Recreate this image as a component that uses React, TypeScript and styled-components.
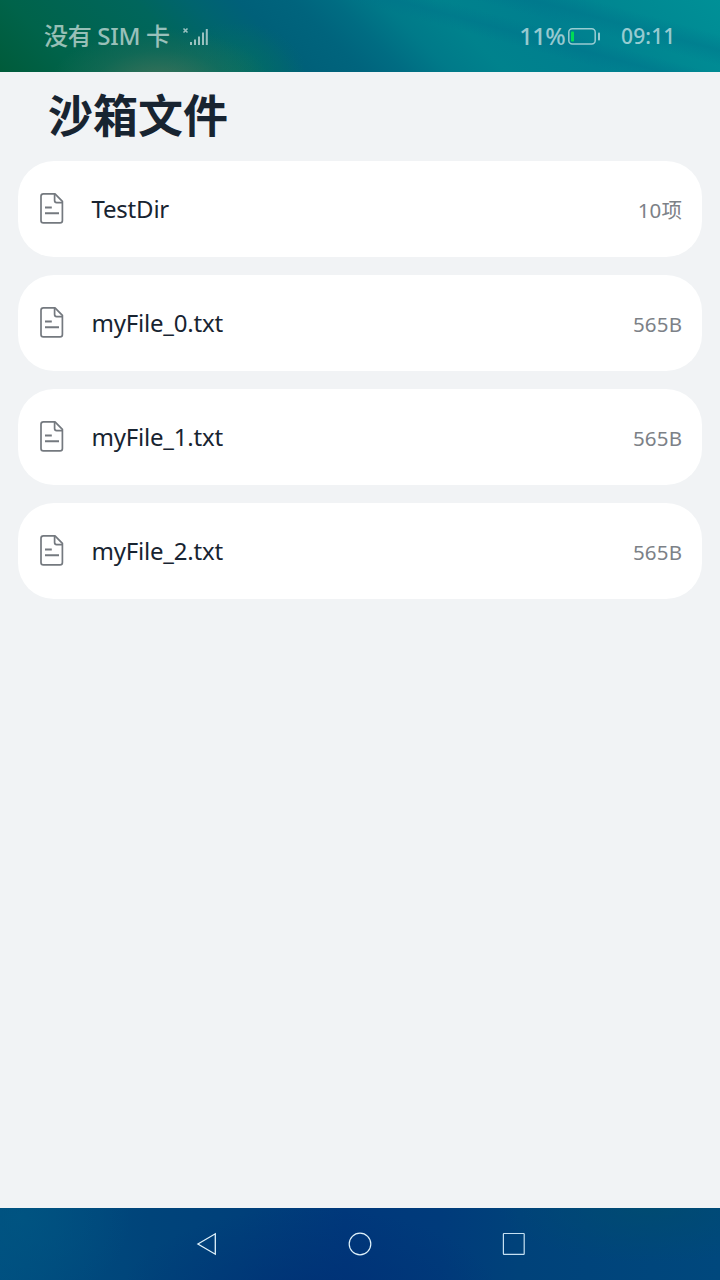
import React from "react";
import styled, { createGlobalStyle } from "styled-components";

const GlobalStyle = createGlobalStyle`
  * { box-sizing: border-box; }
  body {
    margin: 0;
    background: #f1f3f5;
    font-family: "Noto Sans", "Noto Sans CJK SC", sans-serif;
  }
`;

const Screen = styled.div`
  width: 720px;
  height: 1280px;
  display: flex;
  flex-direction: column;
  background: #f1f3f5;
  overflow: hidden;
`;

const StatusBar = styled.header`
  height: 72px;
  flex: none;
  display: flex;
  align-items: center;
  padding: 0 45px 1px 44px;
  color: rgba(255, 255, 255, 0.6);
  background:
    radial-gradient(ellipse 110px 56px at 160px 84px, rgba(70, 116, 90, 0.9), rgba(40, 110, 88, 0.4) 60%, rgba(10, 105, 90, 0) 100%),
    radial-gradient(ellipse 70px 50px at 236px 72px, rgba(4, 112, 98, 0.75), rgba(4, 112, 98, 0) 100%),
    linear-gradient(15deg, transparent 62%, rgba(0, 112, 138, 0.4) 67%, transparent 72%, transparent 75%, rgba(0, 112, 138, 0.4) 81%, transparent 87%),
    linear-gradient(45deg, #005b3a 0, #00634a 10%, #00665c 26%, #00646e 33%, #006079 39%, #00647d 46%, #006c82 51%, #007a89 57%, #00828d 64%, #007f8f 76%, #008892 87%, #009097 100%);
`;

const Carrier = styled.span`
  width: 126px;
  margin-right: 12px;
  font-size: 24px;
  line-height: 36px;
  font-weight: 500;
  letter-spacing: -0.3px;
  white-space: nowrap;
`;

const Percent = styled.span`
  margin-left: auto;
  margin-right: 2px;
  font-size: 24px;
  line-height: 36px;
  font-weight: 500;
  letter-spacing: -0.7px;
`;

const Clock = styled.time`
  width: 54px;
  margin-left: 20px;
  font-size: 21px;
  line-height: 36px;
  font-weight: 500;
  letter-spacing: 0.15px;
  white-space: nowrap;
`;

const Content = styled.main`
  flex: 1;
  display: flex;
  flex-direction: column;
  padding: 0 18px;
`;

const Title = styled.h1`
  height: 89px;
  margin: 0;
  padding-left: 30px;
  color: #182431;
  font-family: "Noto Sans CJK SC", sans-serif;
  font-size: 45px;
  font-weight: 700;
  line-height: 84px;
`;

const FileList = styled.ul`
  display: flex;
  flex-direction: column;
  gap: 18px;
  margin: 0;
  padding: 0;
  list-style: none;
`;

const FileRow = styled.li`
  height: 96px;
  display: flex;
  align-items: center;
  padding: 0 20px 2px 21px;
  border-radius: 36px;
  background: #fff;
`;

const FileName = styled.span`
  flex: 1;
  margin-left: 26.5px;
  padding-top: 2px;
  color: #182431;
  font-size: 24px;
  line-height: 34px;
  font-weight: 450;
  letter-spacing: -0.2px;
`;

const FileMeta = styled.span`
  color: #7c8187;
  font-size: 20.5px;
  font-weight: 400;
  line-height: 30px;
  letter-spacing: 0.2px;
  margin-right: -0.2px;
  padding-top: 3px;
`;

const NavBar = styled.nav`
  height: 72px;
  flex: none;
  display: flex;
  align-items: center;
  justify-content: center;
  gap: 130px;
  background:
    radial-gradient(ellipse 190px 90px at 310px 90px, rgba(0, 46, 116, 0.7), rgba(0, 46, 116, 0) 100%),
    radial-gradient(ellipse 150px 55px at 650px 0, rgba(0, 76, 112, 0.8), rgba(0, 76, 112, 0) 100%),
    radial-gradient(ellipse 110px 90px at 20px 10px, rgba(0, 86, 130, 0.7), rgba(0, 86, 130, 0) 100%),
    linear-gradient(90deg, #004f80 0, #00447a 150px, #00407a 240px, #00387b 345px, #003b7b 440px, #00427a 520px, #00487d 720px);
`;

const SignalIcon = () => (
  <svg width="27" height="20" viewBox="0 0 27 20" fill="none" stroke="currentColor">
    <path d="M1.5 2.5l4 4M5.5 2.5l-4 4" strokeWidth="1.6" />
    <path d="M9 16v3M13 13.5V19M17 10.5V19M21 6.5V19M24.8 3V19" strokeWidth="2" />
  </svg>
);

const BatteryIcon = () => (
  <svg width="34" height="20" viewBox="0 0 34 20" fill="none">
    <rect x="1.8" y="2.8" width="26.4" height="15.2" rx="3.5" stroke="rgba(255,255,255,.6)" strokeWidth="1.5" />
    <rect x="4" y="5.5" width="3" height="10" rx=".8" fill="#00dc55" />
    <rect x="31" y="6.5" width="2" height="8" rx=".8" fill="rgba(255,255,255,.6)" />
  </svg>
);

const FileIcon = () => (
  <svg width="26" height="32" viewBox="0 0 26 32" fill="none" stroke="#74797f" strokeWidth="1.7" strokeLinejoin="round">
    <path d="M4 1.8H16L23.4 9.4V28.4Q23.4 30.8 21 30.8H4.4Q2 30.8 2 28.4V4.2Q2 1.8 4.4 1.8Z" />
    <path d="M15.6 2V8.6Q15.6 10.6 17.6 10.6H23.2" />
    <path d="M6 15.5H12.8M6 21.3H20" strokeWidth="2" />
  </svg>
);

const BackIcon = () => (
  <svg width="24" height="24" viewBox="0 0 24 24" fill="none" stroke="#dff2fb" strokeWidth="1.3">
    <path d="M3.9 12L21.3 1.8V22.2Z" />
  </svg>
);

const HomeIcon = () => (
  <svg width="24" height="24" viewBox="0 0 24 24" fill="none" stroke="#dff2fb" strokeWidth="1.2">
    <circle cx="12" cy="12" r="10.8" />
  </svg>
);

const RecentIcon = () => (
  <svg width="24" height="24" viewBox="0 0 24 24" fill="none" stroke="#c5e0f2" strokeWidth="1.2">
    <rect x="1.4" y="1.5" width="20.8" height="20.8" rx=".6" />
  </svg>
);

const files = [
  { name: "TestDir", meta: "10项" },
  { name: "myFile_0.txt", meta: "565B" },
  { name: "myFile_1.txt", meta: "565B" },
  { name: "myFile_2.txt", meta: "565B" },
];

export default function App() {
  return (
    <Screen>
      <GlobalStyle />
      <StatusBar>
        <Carrier>没有 SIM 卡</Carrier>
        <SignalIcon />
        <Percent>11%</Percent>
        <BatteryIcon />
        <Clock>09:11</Clock>
      </StatusBar>
      <Content>
        <Title>沙箱文件</Title>
        <FileList>
          {files.map((file) => (
            <FileRow key={file.name}>
              <FileIcon />
              <FileName>{file.name}</FileName>
              <FileMeta>{file.meta}</FileMeta>
            </FileRow>
          ))}
        </FileList>
      </Content>
      <NavBar>
        <BackIcon />
        <HomeIcon />
        <RecentIcon />
      </NavBar>
    </Screen>
  );
}
